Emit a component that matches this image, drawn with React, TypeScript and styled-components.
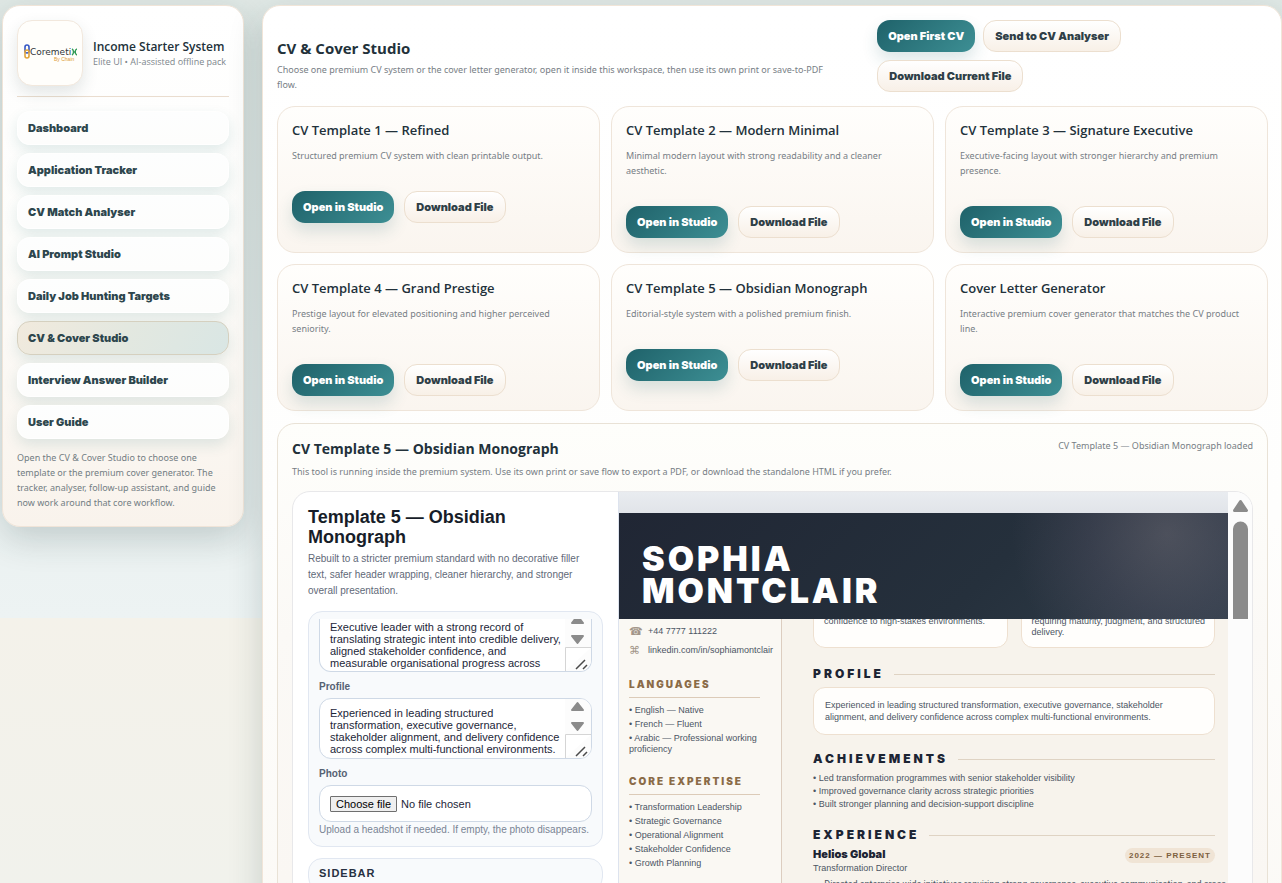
import React from "react";
import styled, { createGlobalStyle, css } from "styled-components";

const ui = `"Open Sans", "Noto Sans", sans-serif`;
const copy = `"Noto Sans", "Open Sans", sans-serif`;
const arial = `"Liberation Sans", Arial, sans-serif`;
const compact = `Roboto, "Liberation Sans", sans-serif`;
const heavy = `Inter, "Liberation Sans", sans-serif`;

const Global = createGlobalStyle`
  *, *::before, *::after { box-sizing: border-box; }
  body { margin: 0; font-family: ${ui}; color: #22313a; }
  h1, h2, h3, h4, p, ul { margin: 0; padding: 0; }
  ul { list-style: none; }
  button, textarea { font: inherit; }
`;

const Page = styled.div`
  height: 100vh;
  overflow: hidden;
  display: grid;
  grid-template-columns: 242px minmax(0, 1fr);
  gap: 18px;
  align-items: start;
  padding: 5px 0 0 2px;
  background: linear-gradient(180deg, #e0e8e5 0%, #edf3f3 70%, #f4f2ea 70%, #f1f2ec 100%);
`;

const Sidebar = styled.aside`
  padding: 14px 14px 16px;
  border: 1px solid #f0e4d8;
  border-radius: 18px;
  background: linear-gradient(180deg, #ffffff 0%, #fdfdfb 45%, #f9f3ec 100%);
  box-shadow: 0 12px 34px rgba(30, 60, 62, 0.2);
`;

const Brand = styled.div`
  display: flex;
  align-items: center;
  gap: 10px;
  padding-bottom: 10px;
  border-bottom: 1px solid #eaddcf;
`;

const LogoCard = styled.div`
  flex: none;
  display: grid;
  place-items: center;
  width: 66px;
  height: 66px;
  border: 1px solid #f2e8dd;
  border-radius: 15px;
  background: #fffefb;
  box-shadow: 0 7px 16px rgba(40, 60, 60, 0.13);
`;

const BrandName = styled.h1`
  font-size: 12px;
  line-height: 16px;
  font-weight: 600;
  white-space: nowrap;
`;

const BrandNote = styled.p`
  font-size: 9px;
  line-height: 13px;
  color: #7d868c;
  white-space: nowrap;
`;

const Nav = styled.nav`
  display: grid;
  gap: 8px;
  margin-top: 14px;
`;

const NavItem = styled.button<{ $active?: boolean }>`
  height: 34px;
  padding: 0 10px;
  border: 1px solid rgba(255, 255, 255, 0.7);
  border-radius: 13px;
  background: linear-gradient(180deg, #fdfefe, #fdfdfc);
  box-shadow: 0 6px 14px rgba(28, 105, 105, 0.13);
  color: #2d464d;
  font-family: ${heavy};
  font-size: 11px;
  font-weight: 900;
  text-align: left;
  cursor: pointer;
  ${(p) =>
    p.$active &&
    css`
      border-color: #d5d0bf;
      background: linear-gradient(120deg, #f1eadd, #e3e8e0 50%, #d9e6e4);
    `}
`;

const SideNote = styled.p`
  margin-top: 11px;
  font-family: ${copy};
  font-size: 9px;
  line-height: 15px;
  color: #727d83;
`;

const Main = styled.main`
  min-height: 100vh;
  padding: 14px 13px 14px 14px;
  border: 1px solid #f1e5d8;
  border-radius: 18px;
  background: linear-gradient(180deg, #ffffff 0%, #fefefd 45%, #faf7f2 100%);
  box-shadow: 0 12px 34px rgba(30, 60, 62, 0.2);
`;

const Header = styled.header`
  display: grid;
  grid-template-columns: minmax(0, 3fr) minmax(0, 2fr);
  gap: 14px;
  align-items: end;
`;

const Heading = styled.div`
  padding-right: 24px;
`;

const Title = styled.h2`
  margin-bottom: 4px;
  font-size: 15px;
  line-height: 20px;
  font-weight: 700;
`;

const Muted = styled.p`
  font-family: ${copy};
  font-size: 9px;
  line-height: 15px;
  color: #777e85;
`;

const Actions = styled.div<{ $gap: number }>`
  display: flex;
  flex-wrap: wrap;
  gap: ${(p) => p.$gap}px;
`;

const Button = styled.button<{ $primary?: boolean }>`
  height: 32px;
  padding: 0 11px;
  border: 1px solid #ecdfcf;
  border-radius: 13px;
  background: linear-gradient(180deg, #ffffff, #f8f0e7);
  color: #2f3f47;
  font-family: ${heavy};
  font-size: 11px;
  font-weight: 900;
  white-space: nowrap;
  cursor: pointer;
  ${(p) =>
    p.$primary &&
    css`
      padding: 0 10px;
      border-color: transparent;
      background: linear-gradient(135deg, #1f626a, #3d8f94) border-box;
      box-shadow: 0 8px 16px rgba(31, 98, 106, 0.16);
      color: #ffffff;
    `}
`;

const Cards = styled.div`
  display: grid;
  grid-template-columns: repeat(3, minmax(0, 1fr));
  gap: 11px;
  margin-top: 14px;
`;

const Card = styled.article`
  padding: 14px;
  border: 1px solid #efe5da;
  border-radius: 18px;
  background: linear-gradient(180deg, #fffefc, #faf5ef);
`;

const CardTitle = styled.h3`
  font-size: 13px;
  line-height: 18px;
  font-weight: 600;
  margin-bottom: 9px;
`;

const CardText = styled(Muted)`
  margin-bottom: 28px;
`;

const Studio = styled.section`
  margin-top: 12px;
  padding: 14px;
  border: 1px solid #e9e2d6;
  border-radius: 18px;
  background: linear-gradient(180deg, #fefefb, #fbf9f6 30%, #f9f5f0);
`;

const StudioHead = styled.div`
  display: flex;
  justify-content: space-between;
`;

const StudioTitle = styled.h3`
  font-size: 14px;
  line-height: 22px;
  font-weight: 700;
  margin-bottom: 4px;
`;

const Frame = styled.div`
  display: grid;
  grid-template-columns: 326px minmax(0, 1fr) 24px;
  margin-top: 12px;
  height: 620px;
  border: 1px solid #e8e8ea;
  border-radius: 18px;
  overflow: hidden;
  background: #ffffff;
`;

const Editor = styled.div`
  padding: 15px;
  border-right: 1px solid #dde3ee;
  font-family: ${arial};
`;

const EditorTitle = styled.h3`
  font-size: 18px;
  line-height: 20px;
  color: #171d29;
`;

const EditorNote = styled.p`
  margin: 4px 0 12px;
  padding-right: 8px;
  font-size: 10px;
  line-height: 16px;
  color: #5f6978;
`;

const Group = styled.section`
  margin-bottom: 11px;
  padding: 7px 10px 9px;
  border: 1px solid #e1e7f1;
  border-radius: 14px;
  background: #f8fafc;
`;

const GroupTitle = styled.h4`
  font-size: 11px;
  line-height: 15px;
  letter-spacing: 1px;
  color: #273142;
`;

const Label = styled.label`
  display: block;
  margin: 7px 0 4px;
  font-size: 10px;
  line-height: 15px;
  font-weight: 700;
  color: #566173;
`;

const Field = styled.div<{ $cut?: boolean }>`
  display: flex;
  align-items: flex-end;
  height: ${(p) => (p.$cut ? 53 : 61)}px;
  border: 1px solid #cfd9e6;
  border-radius: 12px;
  background: #ffffff;
  overflow: hidden;
  ${(p) =>
    p.$cut &&
    css`
      border-top: 0;
      border-top-left-radius: 0;
      border-top-right-radius: 0;
    `}
`;

const TextArea = styled.textarea<{ $cut?: boolean }>`
  flex: 1;
  min-width: 0;
  height: ${(p) => (p.$cut ? 50 : 51)}px;
  padding: 0 0 0 10px;
  border: 0;
  resize: none;
  overflow: hidden;
  background: transparent;
  color: #1c2638;
  font-size: 11px;
  line-height: 12px;
  outline: none;
`;

const FieldRail = styled.svg`
  flex: none;
  display: block;
`;

const Hidden = styled.input`
  position: absolute;
  width: 1px;
  height: 1px;
  opacity: 0;
`;

const FilePicker = styled.label`
  display: flex;
  align-items: center;
  gap: 4px;
  height: 37px;
  padding: 0 10px;
  border: 1px solid #cfd9e6;
  border-radius: 12px;
  background: #ffffff;
  font-size: 11px;
  color: #1c2638;
`;

const FileButton = styled.span`
  padding: 0 5px;
  border: 1px solid #6f6f6f;
  border-radius: 1px;
  background: #efefef;
  color: #000000;
  line-height: 14px;
`;

const Hint = styled.p`
  font-size: 10px;
  line-height: 15px;
  color: #7a8494;
`;

const Preview = styled.div`
  display: flex;
  flex-direction: column;
  padding-top: 21px;
  background: linear-gradient(180deg, #e9ecf0, #e1e4e9 21px);
  font-family: ${arial};
  overflow: hidden;
`;

const Hero = styled.div`
  flex: none;
  height: 106px;
  padding: 30px 23px 0;
  background: radial-gradient(circle at 90% 20%, rgba(175, 155, 165, 0.26), rgba(140, 120, 145, 0.16) 14%, transparent 28%),
    linear-gradient(135deg, #202634, #25303c 60%, #303d49);
`;

const HeroName = styled.h2`
  font-family: ${heavy};
  font-size: 34px;
  line-height: 32px;
  font-weight: 900;
  letter-spacing: 3px;
  color: #ffffff;
  max-width: 300px;
`;

const Sheet = styled.div`
  flex: 1;
  display: grid;
  grid-template-columns: 163px minmax(0, 1fr);
  min-height: 0;
  color: #4c5563;
`;

const SheetSide = styled.aside`
  padding: 4px 10px 0;
  border-right: 1px solid #dccdc0;
  background: #faf8f3;
  font-size: 9px;
`;

const Contact = styled.div`
  display: flex;
  align-items: center;
  gap: 8px;
  height: 16px;
  margin-bottom: 3px;
  white-space: nowrap;
`;

const Glyph = styled.span`
  width: 11px;
  font-family: "DejaVu Sans", sans-serif;
  font-size: 11px;
  color: #a3968a;
`;

const SideTitle = styled.h3`
  width: 131px;
  margin: 19px 0 7px;
  padding-bottom: 6px;
  border-bottom: 1px solid #dccbb8;
  font-family: ${heavy};
  font-size: 10px;
  line-height: 14px;
  font-weight: 900;
  letter-spacing: 2px;
  color: #8a6b47;
  white-space: nowrap;
`;

const SideItem = styled.li`
  width: 131px;
  margin-bottom: 3px;
  line-height: 11px;
  &::before {
    content: "• ";
  }
`;

const SheetMain = styled.div`
  padding: 0 13px 0 31px;
  background: #f7f3ec;
  font-size: 9px;
`;

const Clip = styled.div`
  display: flex;
  align-items: flex-end;
  height: 29px;
  overflow: hidden;
`;

const Highlights = styled.div`
  flex: 1;
  display: grid;
  grid-template-columns: repeat(2, minmax(0, 1fr));
  gap: 13px;
`;

const Box = styled.div`
  padding: 11px;
  border: 1px solid #eee0d0;
  border-radius: 12px;
  background: #fffefc;
  line-height: 12px;
`;

const HighlightBox = styled(Box)`
  padding: 9px 4px 9px 10px;
  line-height: 11px;
`;

const SectionTitle = styled.h3<{ $top: number }>`
  display: flex;
  align-items: center;
  gap: 10px;
  margin: ${(p) => p.$top}px 0 5px;
  font-family: ${heavy};
  font-size: 12px;
  line-height: 16px;
  font-weight: 900;
  letter-spacing: 3px;
  color: #1c2433;
  &::after {
    content: "";
    flex: 1;
    height: 1px;
    background: #dfd3c3;
  }
`;

const Bullet = styled.li`
  line-height: 13px;
  white-space: nowrap;
  &::before {
    content: "• ";
  }
`;

const JobHead = styled.div`
  display: flex;
  justify-content: space-between;
  align-items: flex-start;
  height: 15px;
`;

const Company = styled.h4`
  font-family: ${heavy};
  font-size: 11px;
  line-height: 12px;
  font-weight: 900;
  color: #1c2433;
`;

const Period = styled.span`
  padding: 0 4px;
  border-radius: 8px;
  background: #f0e4d5;
  font-size: 8px;
  line-height: 15px;
  font-weight: 700;
  letter-spacing: 1px;
  color: #7d6040;
`;

const Role = styled.p`
  line-height: 10px;
  margin-bottom: 5px;
`;

const JobList = styled.ul`
  padding-left: 6px;
  font-family: ${compact};
`;

const ScrollRail = styled.div`
  background: #fcfcfc;
`;

function Logo() {
  return (
    <svg width="54" height="20" viewBox="0 0 54 20" role="img" aria-label="Coremetix By Chain">
      <rect x="2" y="2" width="4" height="8" rx="2" fill="none" stroke="#3557c4" strokeWidth="1.6" />
      <rect x="2" y="7" width="4" height="8" rx="2" fill="none" stroke="#e0a33a" strokeWidth="1.6" />
      <text x="7" y="12" fontFamily="DejaVu Sans, sans-serif" fontSize="9" fill="#30353a">Coremeti</text>
      <path d="M49 6c2 1 2 5 0 6M54 6c-2.500 1-2.500 5 0 6M50 9h3" fill="none" stroke="#2f9a55" strokeWidth="1.400" />
      <text x="31" y="18" fontFamily="Liberation Sans, sans-serif" fontSize="5" fill="#dd9b35">By Chain</text>
    </svg>
  );
}

function Rail({ cut }: { cut?: boolean }) {
  const h = cut ? 52 : 59;
  const s = h - 59;
  return (
    <FieldRail width="26" height={h} viewBox={`0 ${-s} 26 ${h}`} aria-hidden="true">
      <rect x="0" y="0" width="26" height="59" fill="#fcfcfc" />
      <path d="M12.500 4L18 11H7z" fill="#8b8b8b" stroke="#8b8b8b" strokeWidth="2" strokeLinejoin="round" />
      <path d="M12.500 31L18 24H7z" fill="#8b8b8b" stroke="#8b8b8b" strokeWidth="2" strokeLinejoin="round" />
      <path d="M0.500 59V35.500H26" fill="#ffffff" stroke="#d5d5d5" />
      <path d="M11 57l9-9M18 57l4-4" stroke="#4a4a4a" strokeWidth="1.500" />
    </FieldRail>
  );
}

const navItems = [
  "Dashboard",
  "Application Tracker",
  "CV Match Analyser",
  "AI Prompt Studio",
  "Daily Job Hunting Targets",
  "CV & Cover Studio",
  "Interview Answer Builder",
  "User Guide",
];

const templates = [
  ["CV Template 1 — Refined", "Structured premium CV system with clean printable output."],
  ["CV Template 2 — Modern Minimal", "Minimal modern layout with strong readability and a cleaner aesthetic."],
  ["CV Template 3 — Signature Executive", "Executive-facing layout with stronger hierarchy and premium presence."],
  ["CV Template 4 — Grand Prestige", "Prestige layout for elevated positioning and higher perceived seniority."],
  ["CV Template 5 — Obsidian Monograph", "Editorial-style system with a polished premium finish."],
  ["Cover Letter Generator", "Interactive premium cover generator that matches the CV product line."],
];

const languages = ["English — Native", "French — Fluent", "Arabic — Professional working proficiency"];
const expertise = [
  "Transformation Leadership",
  "Strategic Governance",
  "Operational Alignment",
  "Stakeholder Confidence",
  "Growth Planning",
];
const achievements = [
  "Led transformation programmes with senior stakeholder visibility",
  "Improved governance clarity across strategic priorities",
  "Built stronger planning and decision-support discipline",
];

export default function App() {
  return (
    <>
      <Global />
      <Page>
        <Sidebar>
          <Brand>
            <LogoCard>
              <Logo />
            </LogoCard>
            <div>
              <BrandName>Income Starter System</BrandName>
              <BrandNote>Elite UI • AI-assisted offline pack</BrandNote>
            </div>
          </Brand>
          <Nav>
            {navItems.map((item) => (
              <NavItem key={item} type="button" $active={item === "CV & Cover Studio"}>
                {item}
              </NavItem>
            ))}
          </Nav>
          <SideNote>
            Open the CV & Cover Studio to choose one template or the premium cover generator. The tracker, analyser,
            follow-up assistant, and guide now work around that core workflow.
          </SideNote>
        </Sidebar>

        <Main>
          <Header>
            <Heading>
              <Title>CV & Cover Studio</Title>
              <Muted>
                Choose one premium CV system or the cover letter generator, open it inside this workspace, then use its
                own print or save-to-PDF flow.
              </Muted>
            </Heading>
            <Actions $gap={8}>
              <Button type="button" $primary>Open First CV</Button>
              <Button type="button">Send to CV Analyser</Button>
              <Button type="button">Download Current File</Button>
            </Actions>
          </Header>

          <Cards>
            {templates.map(([name, text]) => (
              <Card key={name}>
                <CardTitle>{name}</CardTitle>
                <CardText>{text}</CardText>
                <Actions $gap={10}>
                  <Button type="button" $primary>Open in Studio</Button>
                  <Button type="button">Download File</Button>
                </Actions>
              </Card>
            ))}
          </Cards>

          <Studio>
            <StudioHead>
              <StudioTitle>CV Template 5 — Obsidian Monograph</StudioTitle>
              <Muted>CV Template 5 — Obsidian Monograph loaded</Muted>
            </StudioHead>
            <Muted>
              This tool is running inside the premium system. Use its own print or save flow to export a PDF, or
              download the standalone HTML if you prefer.
            </Muted>
            <Frame>
              <Editor>
                <EditorTitle>Template 5 — Obsidian Monograph</EditorTitle>
                <EditorNote>
                  Rebuilt to a stricter premium standard with no decorative filler text, safer header wrapping, cleaner
                  hierarchy, and stronger overall presentation.
                </EditorNote>
                <Group>
                  <Field $cut>
                    <TextArea
                      $cut
                      aria-label="Summary"
                      defaultValue="Executive leader with a strong record of translating strategic intent into credible delivery, aligned stakeholder confidence, and measurable organisational progress across"
                    />
                    <Rail cut />
                  </Field>
                  <Label htmlFor="profile">Profile</Label>
                  <Field>
                    <TextArea
                      id="profile"
                      defaultValue="Experienced in leading structured transformation, executive governance, stakeholder alignment, and delivery confidence across complex multi-functional environments."
                    />
                    <Rail />
                  </Field>
                  <Label htmlFor="photo">Photo</Label>
                  <FilePicker htmlFor="photo">
                    <FileButton>Choose file</FileButton>
                    No file chosen
                  </FilePicker>
                  <Hidden id="photo" type="file" />
                  <Hint>Upload a headshot if needed. If empty, the photo disappears.</Hint>
                </Group>
                <Group>
                  <GroupTitle>SIDEBAR</GroupTitle>
                </Group>
              </Editor>

              <Preview>
                <Hero>
                  <HeroName>SOPHIA MONTCLAIR</HeroName>
                </Hero>
                <Sheet>
                  <SheetSide>
                    <Contact>
                      <Glyph>☎</Glyph>+44 7777 111222
                    </Contact>
                    <Contact>
                      <Glyph>⌘</Glyph>linkedin.com/in/sophiamontclair
                    </Contact>
                    <SideTitle>LANGUAGES</SideTitle>
                    <ul>
                      {languages.map((t) => (
                        <SideItem key={t}>{t}</SideItem>
                      ))}
                    </ul>
                    <SideTitle>CORE EXPERTISE</SideTitle>
                    <ul>
                      {expertise.map((t) => (
                        <SideItem key={t}>{t}</SideItem>
                      ))}
                    </ul>
                  </SheetSide>
                  <SheetMain>
                    <Clip>
                      <Highlights>
                        <HighlightBox>confidence to high-stakes environments.</HighlightBox>
                        <HighlightBox>requiring maturity, judgment, and structured delivery.</HighlightBox>
                      </Highlights>
                    </Clip>
                    <SectionTitle $top={18}>PROFILE</SectionTitle>
                    <Box>
                      Experienced in leading structured transformation, executive governance, stakeholder alignment, and
                      delivery confidence across complex multi-functional environments.
                    </Box>
                    <SectionTitle $top={16}>ACHIEVEMENTS</SectionTitle>
                    <ul>
                      {achievements.map((t) => (
                        <Bullet key={t}>{t}</Bullet>
                      ))}
                    </ul>
                    <SectionTitle $top={16}>EXPERIENCE</SectionTitle>
                    <JobHead>
                      <Company>Helios Global</Company>
                      <Period>2022 — PRESENT</Period>
                    </JobHead>
                    <Role>Transformation Director</Role>
                    <JobList>
                      <Bullet>
                        Directed enterprise-wide initiatives requiring strong governance, executive communication, and
                        cross
                      </Bullet>
                    </JobList>
                  </SheetMain>
                </Sheet>
              </Preview>

              <ScrollRail aria-hidden="true">
                <svg width="24" height="127" viewBox="0 0 24 127">
                  <path d="M12.500 9.500L18.500 18.500H6.500z" fill="#8b8b8b" stroke="#8b8b8b" strokeWidth="3" strokeLinejoin="round" />
                  <path d="M5 127V37a7.500 7.500 0 0 1 15 0v90z" fill="#8b8b8b" />
                </svg>
              </ScrollRail>
            </Frame>
          </Studio>
        </Main>
      </Page>
    </>
  );
}
